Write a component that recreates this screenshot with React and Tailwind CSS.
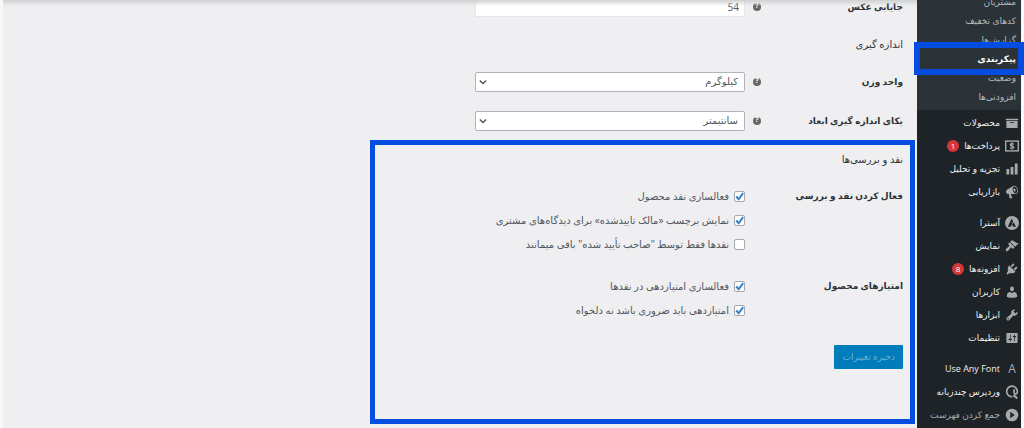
const ICONS = {
  archive: 'M19 4v2H1V4h18zM2 7h16v10H2V7zm11 3V9H7v1h6z',
  chart: 'M18 18V2h-4v16h4zm-6 0V7H8v11h4zm-6 0v-8H2v8h4z',
  megaphone:
    'M18.15 5.94c.46 1.62.38 3.22-.02 4.48-.42 1.28-1.26 2.18-2.3 2.48-.16.06-.26.06-.4.06-.06.02-.12.02-.18.02-.06.02-.14.02-.22.02h-6.8l2.22 5.5c.02.14-.06.26-.14.34-.08.1-.24.16-.34.16H6.95c-.1 0-.26-.06-.34-.16-.08-.08-.16-.2-.14-.34l-1-5.5H4.25l-.02-.02c-.5.06-1.08-.18-1.54-.62s-.88-1.08-1.06-1.88c-.24-.8-.2-1.56-.02-2.2.18-.62.58-1.08 1.06-1.3l.02-.02 9-5.4c.1-.06.18-.1.24-.16.06-.04.14-.08.24-.12.16-.08.28-.12.5-.18 1.04-.3 2.24.1 3.22.98s1.84 2.24 2.26 3.86zm-2.58 5.98h-.02c.4-.1.74-.34 1.04-.7.58-.7.86-1.76.86-3.04 0-.64-.1-1.3-.28-1.98-.34-1.36-1.02-2.5-1.78-3.24s-1.68-1.1-2.46-.88c-.82.22-1.4.96-1.7 2-.32 1.04-.28 2.36.06 3.72.38 1.36 1 2.5 1.8 3.24.78.74 1.62 1.1 2.48.88zm-2.54-7.08c.22-.04.42-.02.62.04.38.16.76.48 1.02 1s.42 1.2.42 1.78c0 .3-.04.56-.12.8-.18.48-.44.84-.86.94-.34.1-.8-.06-1.14-.4s-.64-.86-.78-1.5c-.18-.62-.12-1.24.02-1.72s.48-.84.82-.94z',
  brush:
    'M14.48 11.06L7.41 3.99l1.5-1.5c.5-.56 2.3-.47 3.51.32 1.21.8 1.43 1.28 2.91 2.1 1.18.64 2.45 1.26 4.45.85zm-.71.71L6.7 4.7 4.93 6.47c-.39.39-.39 1.02 0 1.41l1.06 1.06c.39.39.39 1.03 0 1.42-.6.6-1.43 1.11-2.21 1.69-.35.26-.7.53-1.01.84C1.43 14.23.4 16.08 1.4 17.07c.99 1 2.84-.03 4.18-1.36.31-.31.58-.66.85-1.02.57-.78 1.08-1.61 1.69-2.21.39-.39 1.02-.39 1.41 0l1.06 1.06c.39.39 1.02.39 1.41 0z',
  plug:
    'M13.11 4.36L9.87 7.6 8 5.73l3.24-3.24c.35-.34 1.05-.2 1.56.32.52.51.66 1.21.31 1.55zm-8 1.77l.91-1.12 9.01 9.01-1.19.84c-.71.71-2.63 1.16-3.82 1.16H6.14L4.9 17.26c-.59.59-1.54.59-2.12 0-.59-.58-.59-1.53 0-2.12l1.24-1.24v-3.88c0-1.13.4-3.19 1.09-3.89zm7.26 3.97l3.24-3.24c.34-.35 1.04-.21 1.55.31.52.51.66 1.21.31 1.55l-3.24 3.25z',
  user:
    'M10 9.25c-2.27 0-2.73-3.44-2.73-3.44C7 4.02 7.82 2 9.97 2c2.16 0 2.98 2.02 2.71 3.81 0 0-.41 3.44-2.68 3.44zm0 2.57L12.72 10c2.39 0 4.52 2.33 4.52 4.53v2.49s-3.65 1.13-7.24 1.13c-3.65 0-7.24-1.13-7.24-1.13v-2.49c0-2.25 1.94-4.48 4.47-4.48z',
  wrench:
    'M16.68 9.77c-1.34 1.34-3.3 1.67-4.95.99l-5.41 6.52c-.99.99-2.59.99-3.58 0s-.99-2.59 0-3.57l6.52-5.42c-.68-1.65-.35-3.61.99-4.95 1.28-1.28 3.12-1.62 4.72-1.06l-2.89 2.89 2.82 2.82 2.86-2.87c.53 1.58.18 3.39-1.08 4.65zM3.81 16.21c.4.39 1.04.39 1.43 0 .4-.4.4-1.04 0-1.43-.39-.4-1.03-.4-1.43 0-.39.39-.39 1.03 0 1.43z',
  sliders:
    'M18 16V4c0-.55-.45-1-1-1H3c-.55 0-1 .45-1 1v12c0 .55.45 1 1 1h14c.55 0 1-.45 1-1zM8 11h1c.55 0 1 .45 1 1s-.45 1-1 1H8v1.5c0 .28-.22.5-.5.5s-.5-.22-.5-.5V13H6c-.55 0-1-.45-1-1s.45-1 1-1h1V5.5c0-.28.22-.5.5-.5s.5.22.5.5V11zm5-2h-1c-.55 0-1-.45-1-1s.45-1 1-1h1V5.5c0-.28.22-.5.5-.5s.5.22.5.5V7h1c.55 0 1 .45 1 1s-.45 1-1 1h-1v5.5c0 .28-.22.5-.5.5s-.5-.22-.5-.5V9z',
};

const Icon = ({ name }) => {
  if (name === 'letter') {
    return <span className="w-[14px] shrink-0 text-center text-xs text-[#a7aaad]">A</span>;
  }
  return (
    <svg viewBox="0 0 20 20" className="size-[14px] shrink-0 fill-[#a7aaad]" aria-hidden="true">
      {ICONS[name] && <path d={ICONS[name]} />}
      {name === 'money' && (
        <g fill="none" stroke="#a7aaad">
          <rect x="1" y="3" width="18" height="14" strokeWidth="2" />
          <path d="M12.6 7.6c-.6-.8-1.5-1.1-2.6-1.1-1.4 0-2.5.6-2.5 1.700 0 2.500 5.200 1.100 5.200 3.600 0 1.200-1.200 1.700-2.700 1.700-1.200 0-2.200-.4-2.800-1.200M10 5v10" strokeWidth="1.800" />
        </g>
      )}
      {name === 'astra' && (
        <path fillRule="evenodd" d="M10 0a10 10 0 1 0 0 20 10 10 0 0 0 0-20zM9.600 3.600l1.900 4L8 15.400H4L9.600 3.600zm2.800 5.400l3.200 6.400h-3.900l-.9-2.100h-1.600L12.400 9z" />
      )}
      {name === 'wpml' && (
        <g fill="none" stroke="#a7aaad">
          <path d="M10.500 16.800A7.600 7.600 0 1 1 17.600 9c0 2.500-.9 4-2.400 4-1.700 0-2.200-1.300-2.200-3V6" strokeWidth="2.400" />
          <path d="M12 14.500l5.500 4.500" strokeWidth="3" />
        </g>
      )}
      {name === 'collapse' && (
        <path fillRule="evenodd" d="M10 1a9 9 0 1 0 0 18 9 9 0 0 0 0-18zM7.500 5.500l6.500 4.500-6.500 4.500v-9z" />
      )}
    </svg>
  );
};

const subMenu = ['مشتریان', 'کدهای تخفیف', 'گزارش‌ها', 'پیکربندی', 'وضعیت', 'افزودنی‌ها'];

const menuGroups = [
  [
    { icon: 'archive', label: 'محصولات' },
    { icon: 'money', label: 'پرداخت‌ها', badge: 1 },
    { icon: 'chart', label: 'تجزیه و تحلیل' },
    { icon: 'megaphone', label: 'بازاریابی' },
  ],
  [
    { icon: 'astra', label: 'آسترا' },
    { icon: 'brush', label: 'نمایش' },
    { icon: 'plug', label: 'افزونه‌ها', badge: 8 },
    { icon: 'user', label: 'کاربران' },
    { icon: 'wrench', label: 'ابزارها' },
    { icon: 'sliders', label: 'تنظیمات' },
  ],
  [
    { icon: 'letter', label: 'Use Any Font' },
    { icon: 'wpml', label: 'وردپرس چندزبانه' },
  ],
];

const Sidebar = () => (
  <nav className="w-[104px] shrink-0 bg-[#1d2327] text-[9px] text-[#f0f0f1]">
    <ul className="-mt-2 bg-[#2c3338] pb-1 text-[#b4b9be]">
      {subMenu.map((item) => (
        <li key={item} className="relative">
          <a href="#" className={`flex h-[19px] items-center pr-[5px] ${item === 'پیکربندی' ? 'font-bold text-white' : ''}`}>
            {item}
          </a>
          {item === 'پیکربندی' && (
            <span className="pointer-events-none absolute -inset-x-[3px] -inset-y-[7px] z-10 border-[6px] border-[#044de0]" />
          )}
        </li>
      ))}
    </ul>
    <div className="flex flex-col gap-2 pt-px">
      {menuGroups.map((group, i) => (
        <ul key={i}>
          {group.map(({ icon, label, badge }) => (
            <li key={label}>
              <a href="#" className="flex h-[23px] items-center gap-[5px] pr-[2px] whitespace-nowrap">
                <Icon name={icon} />
                {label}
                {badge && (
                  <span className="flex size-3 items-center justify-center rounded-full bg-[#d63638] text-[8px] text-white">{badge}</span>
                )}
              </a>
            </li>
          ))}
          {i === menuGroups.length - 1 && (
            <li>
              <button type="button" className="flex h-[23px] items-center gap-[5px] pr-[2px] whitespace-nowrap text-[#a7aaad]">
                <Icon name="collapse" />
                جمع کردن فهرست
              </button>
            </li>
          )}
        </ul>
      ))}
    </div>
  </nav>
);

const Help = () => (
  <span className="flex size-2 shrink-0 items-center justify-center rounded-full bg-[#666] text-[7px] font-bold text-white">?</span>
);

const Field = ({ id, label, children }) => (
  <div className="flex h-[39px] items-center">
    <label htmlFor={id} className="w-[142px] text-[9px] font-bold">{label}</label>
    <Help />
    <div className="relative mr-2 w-[270px]">{children}</div>
  </div>
);

const Select = ({ id, value }) => (
  <>
    <select id={id} className="h-5 w-full appearance-none rounded-[2px] border border-[#b0b3b9] bg-white pr-[6px] pl-5 text-[#50575e]">
      <option>{value}</option>
    </select>
    <svg viewBox="0 0 10 10" className="pointer-events-none absolute top-[6px] left-1 size-2" aria-hidden="true">
      <path d="M1 3l4 4 4-4" fill="none" stroke="#50575e" strokeWidth="1.800" />
    </svg>
  </>
);

const Check = ({ label, checked }) => (
  <label className="flex h-6 items-center gap-[5px] text-[#50575e]">
    <span className="relative flex">
      <input type="checkbox" defaultChecked={checked} className="peer size-[11px] appearance-none rounded-[2px] border border-[#a5a8ac] bg-white" />
      <svg viewBox="0 0 20 20" className="pointer-events-none absolute inset-0 hidden size-[11px] peer-checked:block" aria-hidden="true">
        <path d="M4 10l4.500 5L16.500 4" fill="none" stroke="#2f83c9" strokeWidth="3.600" />
      </svg>
    </span>
    {label}
  </label>
);

const CheckGroup = ({ title, options }) => (
  <fieldset className="flex">
    <legend className="float-right h-6 w-[158px] text-[9px] leading-6 font-bold">{title}</legend>
    <div>
      {options.map((o) => (
        <Check key={o.label} {...o} />
      ))}
    </div>
  </fieldset>
);

export default function App() {
  return (
    <div
      dir="rtl"
      className="flex min-h-screen overflow-hidden bg-[#f8f8f9] px-[3px] font-['Open_Sans','DejaVu_Sans',sans-serif]"
    >
      <Sidebar />
      <main className="relative grow bg-[#efeff1] pr-[2px] text-[10px] text-[#2c3338]">
        <div className="pointer-events-none absolute inset-x-0 top-0 z-10 h-[6px] bg-linear-to-b from-[#cfd1d3] to-transparent" />
        <div className="-mt-[13px] pr-3">
          <Field id="thumb" label="جایابی عکس">
            <input id="thumb" type="text" defaultValue="54" className="h-5 w-full border border-[#e4e5e8] bg-white pr-[5px] text-[#50575e]" />
          </Field>
          <h2 className="h-9 leading-9">اندازه گیری</h2>
          <Field id="weight" label="واحد وزن">
            <Select id="weight" value="کیلوگرم" />
          </Field>
          <Field id="dimension" label="یکای اندازه گیری ابعاد">
            <Select id="dimension" value="سانتیمتر" />
          </Field>
        </div>
        <section className="w-[545px] max-w-full border-[5px] border-[#044de0] pr-[7px] pb-[50px]">
          <h2 className="h-[39px] pt-[2px] leading-6">نقد و بررسی‌ها</h2>
          <CheckGroup
            title="فعال کردن نقد و بررسی"
            options={[
              { label: 'فعالسازی نقد محصول', checked: true },
              { label: 'نمایش برچسب «مالک تاییدشده» برای دیدگاه‌های مشتری', checked: true },
              { label: 'نقدها فقط توسط "صاحب تأیید شده" باقی میمانند', checked: false },
            ]}
          />
          <div className="mt-[18px]">
            <CheckGroup
              title="امتیازهای محصول"
              options={[
                { label: 'فعالسازی امتیازدهی در نقدها', checked: true },
                { label: 'امتیازدهی باید ضروری باشد نه دلخواه', checked: true },
              ]}
            />
          </div>
          <button type="button" className="mt-[23px] h-6 rounded-[1px] bg-[#007cba] px-2 text-[9px] text-[#66b0d6]">
            ذخیره تغییرات
          </button>
        </section>
      </main>
    </div>
  );
}
